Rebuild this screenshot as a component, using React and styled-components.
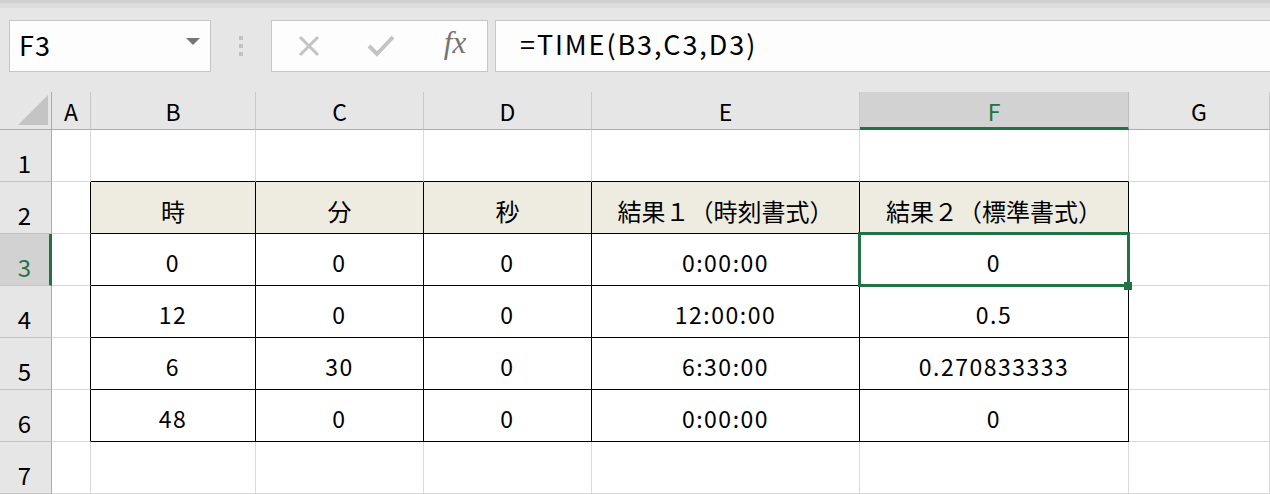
import styled, { createGlobalStyle } from "styled-components";

const GlobalStyle = createGlobalStyle`
  html, body {
    margin: 0;
    padding: 0;
    background: #e6e6e6;
    overflow: hidden;
  }
  body {
    font-family: "Noto Sans CJK JP", "Noto Sans", sans-serif;
    color: #000;
  }
`;

const GREEN = "#217346";
const GRID = "#d9d9d9";

// column widths incl. their right border: header, A..G
const COLS = [52, 39, 165, 168, 168, 268, 269, 141];
const LETTERS = ["A", "B", "C", "D", "E", "F", "G"];

const rows = [
  [null, null, null, null, null, null, null],
  [null, "時", "分", "秒", "結果１（時刻書式）", "結果２（標準書式）", null],
  [null, "0", "0", "0", "0:00:00", "0", null],
  [null, "12", "0", "0", "12:00:00", "0.5", null],
  [null, "6", "30", "0", "6:30:00", "0.270833333", null],
  [null, "48", "0", "0", "0:00:00", "0", null],
  [null, null, null, null, null, null, null],
];

const ACTIVE_ROW = 3;
const ACTIVE_COL = 5; // F

const Page = styled.div`
  width: 1270px;
  height: 494px;
  display: flex;
  flex-direction: column;
  overflow: hidden;
`;

const TopStrip = styled.div`
  height: 5px;
  background: #dcdcdc;
  border-top: 3px solid #d0d0d0;
`;

const Toolbar = styled.div`
  height: 85px;
  box-sizing: border-box;
  padding: 12px 0 0 9px;
  display: flex;
  align-items: flex-start;
`;

const Box = styled.div`
  height: 52px;
  box-sizing: border-box;
  background: #fdfdfd;
  border: 1px solid #c6c6c6;
  display: flex;
  align-items: center;
`;

const NameBox = styled(Box)`
  width: 202px;
  padding: 0 10px 2px 9px;
  justify-content: space-between;
  font-size: 27px;
  letter-spacing: 1px;
`;

const DropArrow = styled.span`
  width: 0;
  height: 0;
  border-left: 7px solid transparent;
  border-right: 7px solid transparent;
  border-top: 7px solid #767676;
  margin-top: -6px;
`;

const Grip = styled.div`
  width: 4px;
  margin: 16px 28px 0 28px;
  display: flex;
  flex-direction: column;
  gap: 4px;

  span {
    display: block;
    height: 4px;
    background: #c2c2c2;
  }
`;

const ButtonGroup = styled(Box)`
  width: 217px;
  padding: 0 0 0 24px;
`;

const IconSlot = styled.span`
  width: ${(p) => p.$w}px;
  display: flex;
  justify-content: center;
  align-items: center;
`;

const Fx = styled.span`
  font-family: "Liberation Serif", "DejaVu Serif", serif;
  font-style: italic;
  font-size: 31px;
  color: #737373;
  margin-top: -5px;
`;

const FormulaBox = styled(Box)`
  flex: 1;
  margin-left: 7px;
  border-right: none;
  padding: 0 0 5px 24px;
  font-size: 27px;
  letter-spacing: 1.9px;
`;

const Sheet = styled.div`
  display: grid;
  grid-template-columns: ${COLS.map((w) => `${w}px`).join(" ")};
  grid-template-rows: 38px repeat(7, 52px);
  background: #fff;
`;

const Corner = styled.div`
  background: #e6e6e6;
  border-right: 1px solid #ababab;
  border-bottom: 1px solid #ababab;
  box-sizing: border-box;
  display: flex;
  align-items: flex-end;
  justify-content: flex-end;
  padding: 0 3px 4px 0;
`;

const ColHeader = styled.div`
  box-sizing: border-box;
  background: ${(p) => (p.$active ? "#d2d2d2" : "#e6e6e6")};
  color: ${(p) => (p.$active ? GREEN : "#000")};
  border-right: 1px solid ${(p) => (p.$active ? "#bcbcbc" : "#c8c8c8")};
  border-bottom: ${(p) => (p.$active ? `3px solid ${GREEN}` : "1px solid #ababab")};
  display: flex;
  align-items: center;
  justify-content: center;
  padding-top: ${(p) => (p.$active ? "2px" : "0")};
  font-size: 23px;
`;

const RowHeader = styled.div`
  box-sizing: border-box;
  background: ${(p) => (p.$active ? "#d2d2d2" : "#e6e6e6")};
  color: ${(p) => (p.$active ? GREEN : "#000")};
  border-right: ${(p) => (p.$active ? `3px solid ${GREEN}` : "1px solid #ababab")};
  border-bottom: 1px solid #c4c4c4;
  display: flex;
  align-items: center;
  justify-content: center;
  padding: 14px ${(p) => (p.$active ? "0" : "2px")} 0 0;
  font-size: 24px;
`;

const Cell = styled.div`
  position: relative;
  box-sizing: border-box;
  background: ${(p) => (p.$head ? "#eeece1" : "#fff")};
  border-right: 1px solid ${(p) => (p.$darkRight ? "#000" : GRID)};
  border-bottom: 1px solid ${(p) => (p.$darkBottom ? "#000" : GRID)};
  display: flex;
  align-items: center;
  justify-content: center;
  padding-top: 5px;
  font-size: ${(p) => (p.$head ? "24px" : "23px")};
  letter-spacing: ${(p) => (p.$head ? "0" : "1.5px")};
  white-space: nowrap;
`;

const Selection = styled.div`
  position: absolute;
  z-index: 2;
  inset: -2px;
  border: 3px solid ${GREEN};
  pointer-events: none;
`;

const FillHandle = styled.div`
  position: absolute;
  right: -5px;
  bottom: -6px;
  width: 8px;
  height: 8px;
  background: ${GREEN};
`;

// table B2:F6 carries black borders
const inTable = (r, c) => r >= 2 && r <= 6 && c >= 1 && c <= 5;

const CornerMark = () => (
  <svg width="30" height="30" viewBox="0 0 30 30">
    <polygon points="30,0 30,30 0,30" fill="#c4c4c4" />
  </svg>
);

const CancelIcon = () => (
  <svg width="24" height="24" viewBox="0 0 24 24">
    <path d="M3 3 L21 21 M21 3 L3 21" stroke="#c3c3c3" strokeWidth="3" fill="none" />
  </svg>
);

const EnterIcon = () => (
  <svg width="28" height="24" viewBox="0 0 28 24">
    <path d="M2 12 L10 20 L26 3" stroke="#c3c3c3" strokeWidth="4" fill="none" />
  </svg>
);

export default function App() {
  return (
    <Page>
      <GlobalStyle />
      <TopStrip />
      <Toolbar>
        <NameBox>
          <span>F3</span>
          <DropArrow />
        </NameBox>
        <Grip>
          <span />
          <span />
          <span />
        </Grip>
        <ButtonGroup>
          <IconSlot $w={26}>
            <CancelIcon />
          </IconSlot>
          <IconSlot $w={118}>
            <EnterIcon />
          </IconSlot>
          <IconSlot $w={30}>
            <Fx>fx</Fx>
          </IconSlot>
        </ButtonGroup>
        <FormulaBox>=TIME(B3,C3,D3)</FormulaBox>
      </Toolbar>

      <Sheet>
        <Corner>
          <CornerMark />
        </Corner>
        {LETTERS.map((l, i) => (
          <ColHeader key={l} $active={i === ACTIVE_COL}>
            {l}
          </ColHeader>
        ))}
        {rows.map((row, ri) => {
          const r = ri + 1;
          return [
            <RowHeader key={`h${r}`} $active={r === ACTIVE_ROW}>
              {r}
            </RowHeader>,
            ...row.map((val, c) => (
              <Cell
                key={`${r}-${c}`}
                $head={r === 2 && c >= 1 && c <= 5}
                $darkRight={inTable(r, c) || inTable(r, c + 1)}
                $darkBottom={inTable(r, c) || inTable(r + 1, c)}
              >
                {val}
                {r === ACTIVE_ROW && c === ACTIVE_COL && (
                  <Selection>
                    <FillHandle />
                  </Selection>
                )}
              </Cell>
            )),
          ];
        })}
      </Sheet>
    </Page>
  );
}
